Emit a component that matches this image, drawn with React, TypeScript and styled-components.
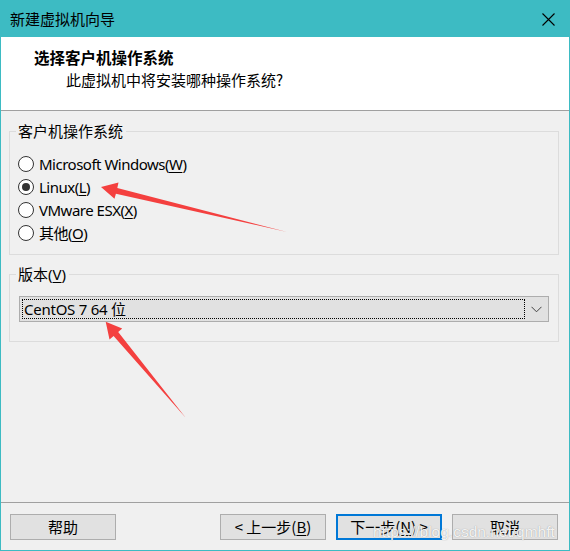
import React from 'react'
import styled, {createGlobalStyle} from 'styled-components'

const teal = '#3dbbc3'
const uiFont = '"Noto Sans", "Noto Sans CJK SC", sans-serif'

const GlobalStyle = createGlobalStyle`
    html, body {
        margin: 0;
        padding: 0;
        background: #f0f0f0;
    }
    * {
        box-sizing: border-box;
    }
`

const Window = styled.div`
    width: 570px;
    height: 551px;
    position: relative;
    display: flex;
    flex-direction: column;
    background: #f0f0f0;
    border: 1px solid ${teal};
    font-family: ${uiFont};
    font-size: 15px;
    color: #000;
    overflow: hidden;
`

const TitleBar = styled.div`
    height: 36px;
    flex: none;
    display: flex;
    align-items: center;
    justify-content: space-between;
    background: ${teal};
    padding: 0 14px 0 9px;
`

const TitleText = styled.span`
    font-family: "Noto Sans CJK SC", sans-serif;
    font-size: 15px;
    line-height: 20px;
`

const Header = styled.div`
    height: 74px;
    flex: none;
    background: #fff;
    border-bottom: 1px solid #a0a0a0;
    padding: 10px 0 0 33px;
`

const HeaderTitle = styled.div`
    font-family: "Noto Sans CJK SC", sans-serif;
    font-weight: 700;
    font-size: 15.5px;
    line-height: 20px;
`

const HeaderSub = styled.div`
    font-family: "Noto Sans CJK SC", sans-serif;
    font-size: 15px;
    line-height: 20px;
    margin-top: 3px;
    padding-left: 32px;
`

const Body = styled.div`
    flex: 1;
    padding: 10px 10px 0 8px;
    display: flex;
    flex-direction: column;
`

const Group = styled.fieldset<{gap?: number}>`
    margin: ${props => props.gap || 0}px 0 0 0;
    border: 1px solid #dcdcdc;
    padding: 0;
    min-inline-size: 0;
`

const Legend = styled.legend`
    margin-left: 6px;
    padding: 0 3px 0 2px;
    line-height: 20px;
    font-size: 15px;
`

const RadioList = styled.div`
    padding: 11px 8px 10px 8px;
    display: flex;
    flex-direction: column;
`

const RadioRow = styled.label`
    height: 23px;
    display: flex;
    align-items: center;
    gap: 5px;
    line-height: 20px;
    letter-spacing: -0.5px;
`

const RadioCircle = styled.span<{checked?: boolean}>`
    width: 16px;
    height: 16px;
    flex: none;
    border: 1px solid #333;
    border-radius: 50%;
    background: #fff;
    display: flex;
    align-items: center;
    justify-content: center;
    &::after {
        content: '';
        width: 8px;
        height: 8px;
        border-radius: 50%;
        background: ${props => props.checked ? '#333' : 'transparent'};
    }
`

const Key = styled.u`
    text-underline-offset: 2px;
`

const ComboWrap = styled.div`
    padding: 12px 9px 19px 9px;
`

const Combo = styled.div`
    height: 26px;
    display: flex;
    align-items: center;
    background: #e1e1e1;
    border: 1px solid #adadad;
    padding: 0 0 0 2px;
`

const ComboFocus = styled.div`
    flex: 1;
    height: 20px;
    border: 1px dotted #000;
    display: flex;
    align-items: center;
    padding-left: 1px;
    line-height: 18px;
    letter-spacing: -0.25px;
`

const ComboArrow = styled.div`
    width: 23px;
    flex: none;
    display: flex;
    justify-content: center;
    align-items: center;
`

const Footer = styled.div`
    height: 48px;
    flex: none;
    border-top: 1px solid #a0a0a0;
    display: flex;
    align-items: flex-start;
    padding: 11px 11px 0 9px;
`

const Button = styled.div<{primary?: boolean}>`
    width: 106px;
    height: 26px;
    display: flex;
    align-items: center;
    justify-content: center;
    background: #e1e1e1;
    border: ${props => props.primary ? '2px solid #0078d7' : '1px solid #adadad'};
    font-family: "Noto Sans CJK SC", sans-serif;
    font-size: 15px;
    line-height: 20px;
`

const Spacer = styled.div`
    flex: 1;
`

const ButtonGroup = styled.div`
    display: flex;
    gap: 10px;
`

const Watermark = styled.div`
    position: absolute;
    left: 372px;
    top: 522px;
    font-family: "Liberation Sans", sans-serif;
    font-size: 15.5px;
    color: rgba(255, 255, 255, 0.9);
    text-shadow: 0 0 1px rgba(110, 110, 110, 0.7);
    pointer-events: none;
`

const Overlay = styled.svg`
    position: absolute;
    left: -1px;
    top: -1px;
    pointer-events: none;
`

interface OsOption {
    label: string;
    key: string;
    checked?: boolean;
}

const osOptions: OsOption[] = [
    {label: 'Microsoft Windows', key: 'W'},
    {label: 'Linux', key: 'L', checked: true},
    {label: 'VMware ESX', key: 'X'},
    {label: '其他', key: 'O'},
]

function App() {
    return (
        <>
            <GlobalStyle />
            <Window>
                <TitleBar>
                    <TitleText>新建虚拟机向导</TitleText>
                    <svg width="13" height="13" viewBox="0 0 13 13">
                        <path d="M0.5 0.5 L12.5 12.5 M12.5 0.5 L0.5 12.5" stroke="#000" strokeWidth="1.1" fill="none" />
                    </svg>
                </TitleBar>
                <Header>
                    <HeaderTitle>选择客户机操作系统</HeaderTitle>
                    <HeaderSub>此虚拟机中将安装哪种操作系统?</HeaderSub>
                </Header>
                <Body>
                    <Group>
                        <Legend>客户机操作系统</Legend>
                        <RadioList>
                            {osOptions.map(opt => (
                                <RadioRow key={opt.key}>
                                    <RadioCircle checked={opt.checked} />
                                    <span>{opt.label}(<Key>{opt.key}</Key>)</span>
                                </RadioRow>
                            ))}
                        </RadioList>
                    </Group>
                    <Group gap={9}>
                        <Legend>版本(<Key>V</Key>)</Legend>
                        <ComboWrap>
                            <Combo>
                                <ComboFocus>CentOS 7 64 位</ComboFocus>
                                <ComboArrow>
                                    <svg width="11" height="7" viewBox="0 0 11 7">
                                        <path d="M0.5 0.8 L5.5 5.8 L10.5 0.8" stroke="#404040" strokeWidth="1" fill="none" />
                                    </svg>
                                </ComboArrow>
                            </Combo>
                        </ComboWrap>
                    </Group>
                </Body>
                <Footer>
                    <Button>帮助</Button>
                    <Spacer />
                    <ButtonGroup>
                        <Button>&lt; 上一步(<Key>B</Key>)</Button>
                        <Button primary>下一步(<Key>N</Key>) &gt;</Button>
                        <Button>取消</Button>
                    </ButtonGroup>
                </Footer>
                <Watermark>https://blog.csdn.net/qmhft</Watermark>
                <Overlay width="570" height="551" viewBox="0 0 570 551">
                    <polygon
                        points="101,187 118.5,182.5 117.3,187.9 287,232 115.9,193.7 114.5,198.8"
                        fill="#f4403f"
                    />
                    <polygon
                        points="105.7,321.7 122.2,328.6 118.2,332.1 185.7,417.7 113.6,335.9 109.5,339.4"
                        fill="#f4403f"
                    />
                </Overlay>
            </Window>
        </>
    )
}

export default App
